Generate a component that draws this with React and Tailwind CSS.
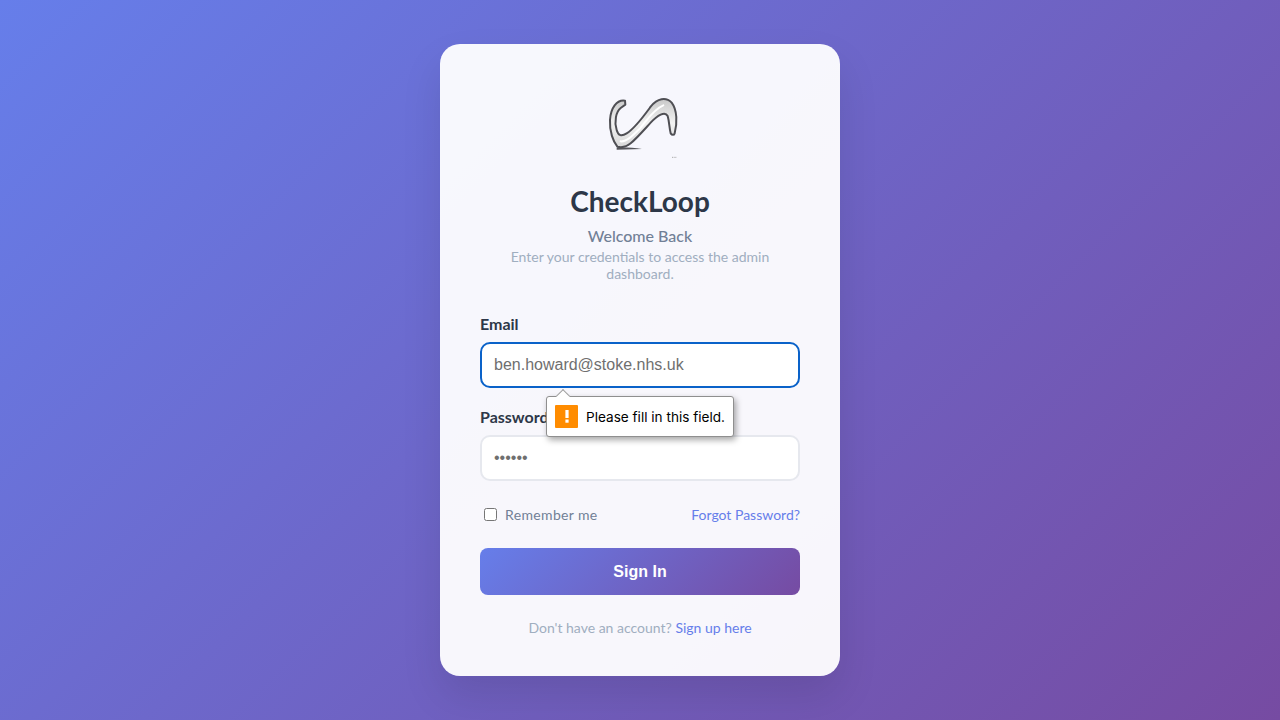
const sans = "font-['Lato','Noto_Sans',sans-serif]"

function Logo() {
  return (
    <svg className="block w-[80px] h-[80px]" viewBox="60 24 240 240" fill="none">
      <defs>
        <linearGradient id="tube" x1="0" y1="0" x2="0" y2="1">
          <stop offset="0" stopColor="#c8c8c8" />
          <stop offset="0.5" stopColor="#f2f2f2" />
          <stop offset="1" stopColor="#d8d8d8" />
        </linearGradient>
      </defs>
      <path d="M110 203 C130 200 160 204 186 207 L110 209 Z" fill="#55555a" />
      <path
        d="M135 62 C110 58 92 85 90 120 C88 155 100 185 112 200 C128 204 140 200 152 190 C170 175 190 152 212 128 C232 106 255 92 263 108 C268 125 268 145 272 160 C276 166 282 166 284 160 C292 130 292 90 275 68 C258 50 232 55 212 80 C190 110 165 145 140 160 C125 170 115 168 110 150 C102 125 108 95 122 84 L136 74 Z"
        fill="url(#tube)"
        stroke="#4f4f54"
        strokeWidth="6"
        strokeLinejoin="round"
      />
      <path d="M122 184 C140 186 160 165 180 145 C200 122 220 88 250 76" stroke="#ffffff" strokeWidth="6" strokeLinecap="round" />
      <path d="M276 232 L290 232" stroke="#aaaaaa" strokeWidth="3" strokeDasharray="3 2" />
    </svg>
  )
}

function Tooltip() {
  return (
    <div className="absolute left-[66px] top-[81px] z-10 flex items-center h-[41px] w-[188px] pl-[8px] bg-white border border-[#8f8f8f] rounded-[3px] shadow-[2px_3px_6px_rgba(0,0,0,0.35)] font-['Inter',sans-serif] text-[13.6px] text-black">
      <span className="absolute left-[11px] -top-[6px] w-[10px] h-[10px] rotate-45 bg-white border-l border-t border-[#a0a0a0]" />
      <span className="flex items-center justify-center w-[23px] h-[23px] mr-[8px] bg-[#ff8c00] rounded-[1px]">
        <svg width="6" height="15" viewBox="0 0 6 15"><rect x="1.400" y="1" width="3.200" height="8" fill="#fff" /><rect x="1.400" y="10.500" width="3.200" height="3.200" fill="#fff" /></svg>
      </span>
      <span className="pt-[1px] whitespace-nowrap">Please fill in this field.</span>
    </div>
  )
}

export default function App() {
  return (
    <div className={`min-h-screen flex items-center justify-center bg-[linear-gradient(135deg,#667eea_0%,#764ba2_100%)] ${sans}`}>
      <div className="w-[400px] h-[632px] px-[40px] pt-[44px] rounded-[20px] bg-[rgba(255,255,255,0.95)] shadow-[0_20px_40px_rgba(0,0,0,0.1)]">
        <div className="flex flex-col items-center text-center">
          <Logo />
          <h1 className="mt-[16px] text-[28px] leading-[34px] font-bold text-[#2d3748]">CheckLoop</h1>
          <h2 className="mt-[8px] text-[16px] leading-[20px] font-medium text-[#718096]">Welcome Back</h2>
          <p className="mt-[2px] text-[14px] leading-[17px] text-[#a0aec0]">Enter your credentials to access the admin dashboard.</p>
        </div>

        <form className="mt-[33px]">
          <div className="relative">
            <label className="block text-[16px] leading-[18px] font-bold text-[#2d3748]">Email</label>
            <input
              readOnly
              value="ben.howard@stoke.nhs.uk"
              className="block mt-[9px] w-full h-[46px] px-[12px] bg-white border-2 border-[#0a62c9] rounded-[10px] outline-none font-['Liberation_Sans',sans-serif] text-[16px] text-[#6f6f6f]"
            />
            <Tooltip />
          </div>
          <div className="mt-[20px]">
            <label className="block text-[16px] leading-[18px] font-bold text-[#2d3748]">Password</label>
            <input
              readOnly
              type="password"
              value="secret"
              className="block mt-[9px] w-full h-[46px] px-[12px] bg-white border-2 border-[#e6e8ee] rounded-[10px] outline-none font-['Liberation_Sans',sans-serif] text-[16px] text-[#6f6f6f]"
            />
          </div>

          <div className="flex items-center justify-between mt-[24px] h-[18px]">
            <label className="flex items-center pl-[4px] text-[14px] tracking-[0.35px] text-[#718096]">
              <span className="w-[13px] h-[13px] mr-[8px] bg-white border border-[#767676] rounded-[2.500px]" />
              Remember me
            </label>
            <a className="text-[14px] text-[#667eea]">Forgot Password?</a>
          </div>

          <button type="button" className="block mt-[25px] w-full h-[47px] rounded-[8px] bg-[linear-gradient(135deg,#667eea_0%,#764ba2_100%)] font-['Liberation_Sans',sans-serif] text-[16px] font-bold text-white">
            Sign In
          </button>

          <p className="mt-[24px] text-center text-[14px] leading-[18px] text-[#a0aec0]">
            Don't have an account? <a className="text-[#667eea]">Sign up here</a>
          </p>
        </form>
      </div>
    </div>
  )
}
